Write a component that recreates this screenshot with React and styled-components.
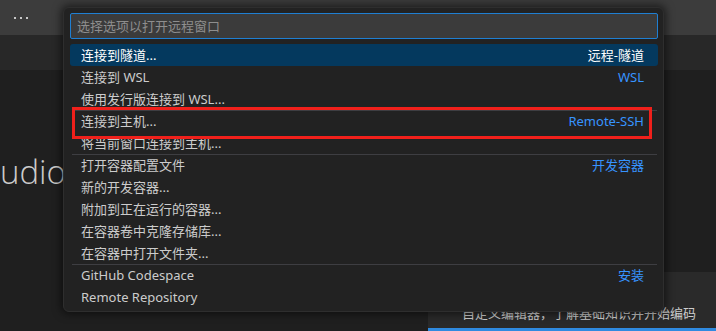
import React from "react";
import styled, { createGlobalStyle } from "styled-components";

const GlobalStyle = createGlobalStyle`
  html, body { margin: 0; padding: 0; background: #1f1f1f; }
  * { box-sizing: border-box; }
`;

const FONT = `"Noto Sans", "Noto Sans CJK SC", sans-serif`;

const Window = styled.div`
  position: relative;
  width: 716px;
  height: 331px;
  overflow: hidden;
  display: flex;
  flex-direction: column;
  background: #1f1f1f;
  font-family: ${FONT};
`;

const TitleBar = styled.div`
  height: 35px;
  flex: none;
  background: #3c3c3c;
  display: flex;
  align-items: center;
  padding-left: 13px;
`;

const TabBar = styled.div`
  height: 35px;
  flex: none;
  background: #282828;
`;

const Editor = styled.div`
  flex: 1;
  display: flex;
  flex-direction: column;
`;

const Hero = styled.div`
  margin-top: 82px;
  font-family: "Open Sans", sans-serif;
  font-weight: 300;
  font-size: 33px;
  line-height: 40px;
  color: #cccccc;
  white-space: nowrap;
`;

const WelcomeCard = styled.div`
  margin-top: auto;
  margin-left: 428px;
  height: 59px;
  background: #2a2a2a;
  border-bottom: 3px solid #2f8ae0;
  padding: 32px 0 0 34px;
  font-size: 13px;
  line-height: 18px;
  color: #cccccc;
  white-space: nowrap;
`;

const QuickPick = styled.div`
  position: absolute;
  left: 63px;
  top: 7px;
  width: 601px;
  background: #222222;
  border: 1px solid #2e2e2e;
  border-radius: 6px;
  box-shadow: 0 0 8px 2px rgba(0, 0, 0, 0.55);
  padding: 5px 5px 3px 6px;
`;

const SearchBox = styled.div`
  height: 26px;
  background: #3b3b3b;
  border: 1px solid #1f7fd2;
  border-radius: 2px;
  display: flex;
  align-items: center;
  padding-left: 6px;
  font-size: 13px;
  line-height: 18px;
  color: #8e8e8e;
  margin-bottom: 5px;
`;

const List = styled.div`
  display: flex;
  flex-direction: column;
`;

const Row = styled.div`
  position: relative;
  height: 22px;
  display: flex;
  align-items: center;
  justify-content: space-between;
  padding: 0 14px 0 11px;
  font-size: 13px;
  line-height: 17px;
  color: ${(p) => (p.$active ? "#ffffff" : "#cccccc")};
  background: ${(p) => (p.$active ? "#04395e" : "transparent")};
  border-radius: 3px;
  white-space: nowrap;
  &::before {
    content: "";
    display: ${(p) => (p.$separator ? "block" : "none")};
    position: absolute;
    left: 2px;
    right: 1px;
    top: 0;
    height: 1px;
    background: #3e3e42;
  }
`;

const Label = styled.span`
  padding-top: 1px;
`;

const Detail = styled.span`
  color: ${(p) => (p.$active ? "#ffffff" : "#3794ff")};
  padding-top: 1px;
`;

const Highlight = styled.div`
  position: absolute;
  left: 8px;
  top: 99px;
  width: 580px;
  height: 32px;
  border: 3px solid #f0201b;
  pointer-events: none;
`;

const items = [
  { label: "连接到隧道...", detail: "远程-隧道", active: true },
  { label: "连接到 WSL", detail: "WSL" },
  { label: "使用发行版连接到 WSL..." },
  { label: "连接到主机...", detail: "Remote-SSH", separator: true },
  { label: "将当前窗口连接到主机..." },
  { label: "打开容器配置文件", detail: "开发容器", separator: true },
  { label: "新的开发容器..." },
  { label: "附加到正在运行的容器..." },
  { label: "在容器卷中克隆存储库..." },
  { label: "在容器中打开文件夹..." },
  { label: "GitHub Codespace", detail: "安装", separator: true },
  { label: "Remote Repository" },
];

const MoreIcon = () => (
  <svg width="16" height="4" viewBox="0 0 16 4">
    <rect x="1" y="1" width="2" height="2" fill="#c8c8c8" />
    <rect x="7" y="1" width="2" height="2" fill="#c8c8c8" />
    <rect x="13" y="1" width="2" height="2" fill="#c8c8c8" />
  </svg>
);

export default function App() {
  return (
    <>
      <GlobalStyle />
      <Window>
        <TitleBar>
          <MoreIcon />
        </TitleBar>
        <TabBar />
        <Editor>
          <Hero>udio</Hero>
          <WelcomeCard>自定义编辑器，了解基础知识并开始编码</WelcomeCard>
        </Editor>
        <QuickPick>
          <SearchBox>选择选项以打开远程窗口</SearchBox>
          <List>
            {items.map((it) => (
              <Row key={it.label} $active={it.active} $separator={it.separator}>
                <Label>{it.label}</Label>
                {it.detail && <Detail $active={it.active}>{it.detail}</Detail>}
              </Row>
            ))}
          </List>
          <Highlight />
        </QuickPick>
      </Window>
    </>
  );
}
